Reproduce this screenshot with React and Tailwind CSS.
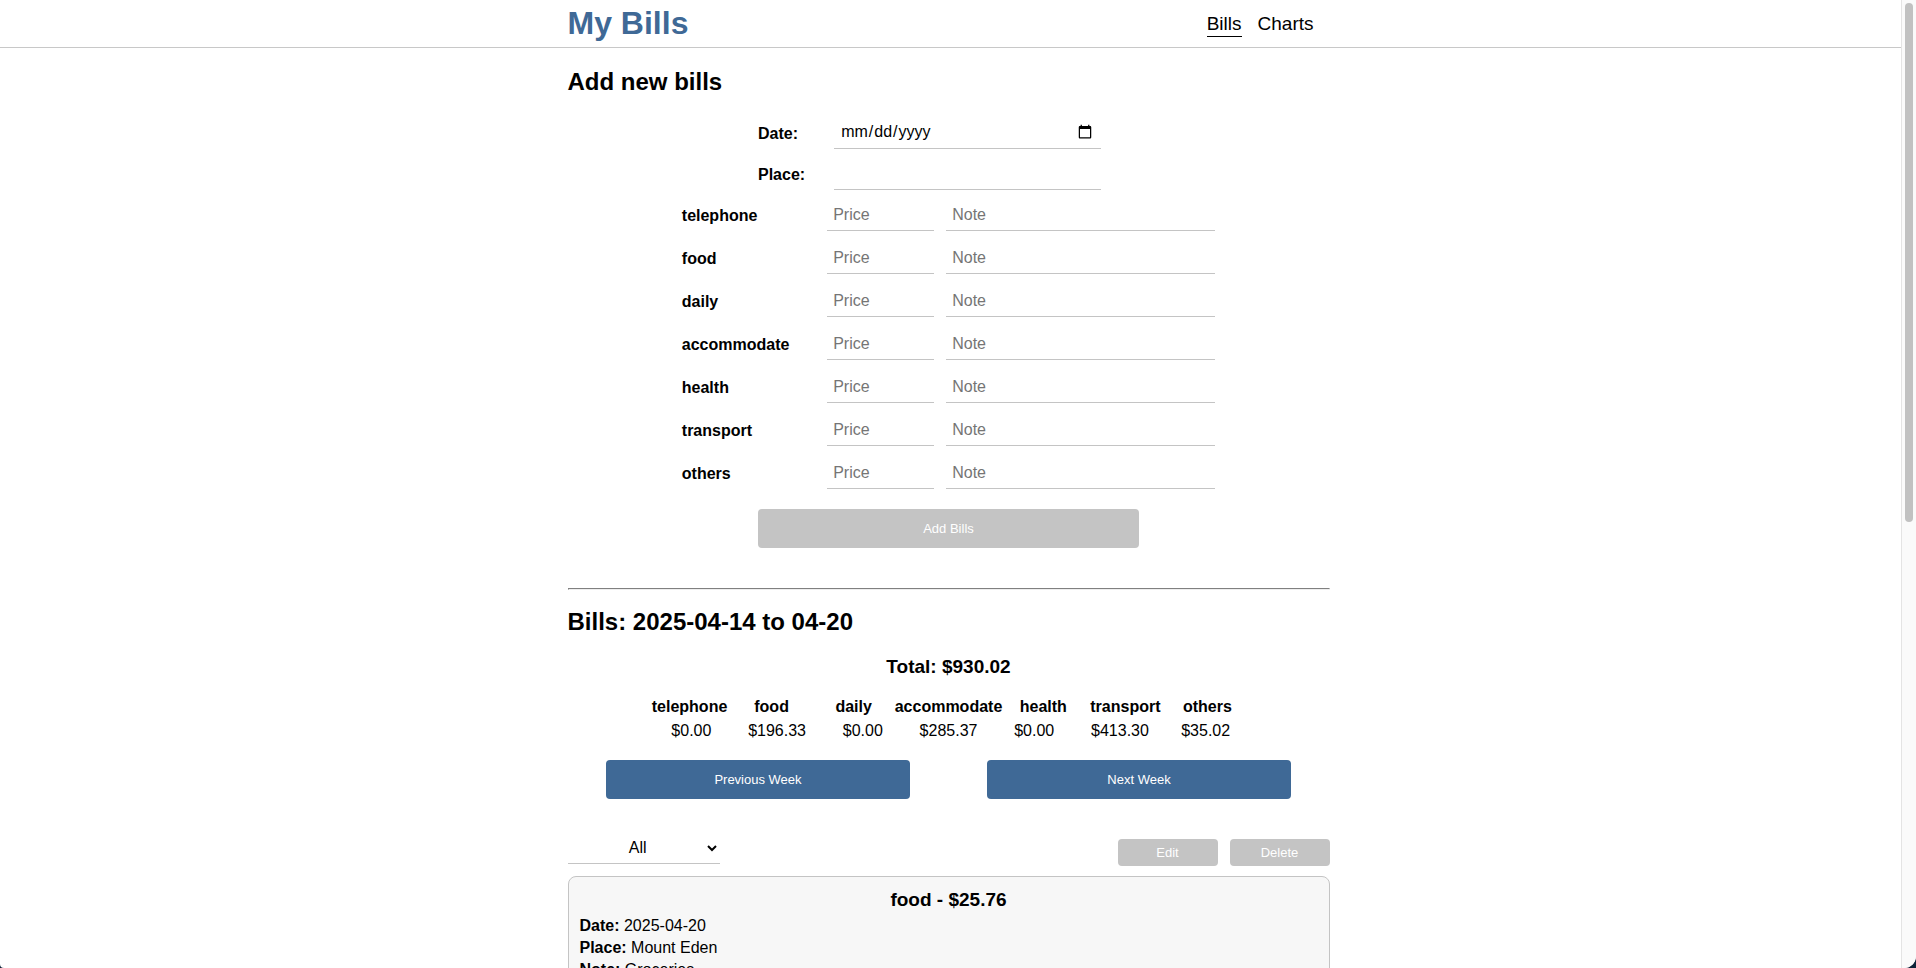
import { useState } from "react";

const categories = [
  { name: "telephone", total: "$0.00" },
  { name: "food", total: "$196.33" },
  { name: "daily", total: "$0.00" },
  { name: "accommodate", total: "$285.37" },
  { name: "health", total: "$0.00" },
  { name: "transport", total: "$413.30" },
  { name: "others", total: "$35.02" },
];

const bills = [
  { category: "food", price: "$25.76", date: "2025-04-20", place: "Mount Eden", note: "Groceries" },
];

const field =
  "h-8 border-b border-[#c4c4c4] bg-white px-1.5 text-base text-black placeholder:text-[#757575] outline-none";
const primaryButton = "h-[39px] rounded bg-[#3f6996] text-[13px] text-white";
const disabledButton = "rounded bg-[#c4c4c4] text-[13px] text-white";

function Header() {
  return (
    <header className="border-b border-[#c8c8c8] pr-1">
      <div className="mx-auto flex h-[47px] max-w-[762px] items-center justify-between pr-4">
        <h1 className="pb-0.5 text-[32px] leading-9 font-bold text-[#3f6996]">My Bills</h1>
        <nav className="flex gap-4 pt-0.5 text-[19px] leading-6">
          <a href="#bills" className="border-b border-black">Bills</a>
          <a href="#charts" className="border-b border-transparent">Charts</a>
        </nav>
      </div>
    </header>
  );
}

function BillForm() {
  return (
    <form>
      <h2 className="mt-5 text-2xl leading-7 font-bold">Add new bills</h2>
      <div className="mx-auto mt-[21px] flex w-1/2 flex-col gap-[9px]">
        <div className="flex items-center">
          <label htmlFor="date" className="w-1/5 pt-0.5 font-bold">Date:</label>
          <input id="date" type="date" className={`${field} w-[70%] pb-0.5`} />
        </div>
        <div className="flex items-center">
          <label htmlFor="place" className="w-1/5 pt-0.5 font-bold">Place:</label>
          <input id="place" type="text" className={`${field} w-[70%]`} />
        </div>
      </div>
      <div className="mx-auto mt-[9px] flex w-[70%] flex-col gap-[11px]">
        {categories.map(({ name }) => (
          <div key={name} className="flex items-center gap-3">
            <label htmlFor={name} className="-mr-3 flex-1 pt-0.5 font-bold">{name}</label>
            <input id={name} type="text" placeholder="Price" className={`${field} w-[107px]`} />
            <input type="text" placeholder="Note" aria-label={`${name} note`} className={`${field} w-[269px]`} />
          </div>
        ))}
      </div>
      <button type="submit" disabled className={`${disabledButton} mx-auto mt-5 block h-[39px] w-1/2`}>
        Add Bills
      </button>
    </form>
  );
}

function WeekSummary() {
  return (
    <section>
      <h2 className="mt-[18px] text-2xl leading-7 font-bold">Bills: 2025-04-14 to 04-20</h2>
      <h3 className="mt-[19px] text-center text-[19px] leading-6 font-bold">Total: $930.02</h3>
      <table className="mx-auto mt-4 block w-[600px] text-center">
        <thead className="block">
          <tr className="flex">
            {categories.map(({ name }) => (
              <th key={name} scope="col" className="flex-1">{name}</th>
            ))}
          </tr>
        </thead>
        <tbody className="block">
          <tr className="flex">
            {categories.map(({ name, total }) => (
              <td key={name} className="flex-1">{total}</td>
            ))}
          </tr>
        </tbody>
      </table>
      <div className="mt-[17px] flex justify-around">
        <button type="button" className={`${primaryButton} w-2/5`}>Previous Week</button>
        <button type="button" className={`${primaryButton} w-2/5`}>Next Week</button>
      </div>
    </section>
  );
}

function BillList() {
  const [filter, setFilter] = useState("All");
  return (
    <section>
      <div className="mt-[33px] flex justify-between">
        <select
          aria-label="Category"
          value={filter}
          onChange={(e) => setFilter(e.target.value)}
          className="h-8 w-1/5 border-b border-[#c4c4c4] bg-white text-center text-base text-black outline-none"
        >
          <option>All</option>
          {categories.map(({ name }) => (
            <option key={name}>{name}</option>
          ))}
        </select>
        <div className="flex gap-3 pt-[7px]">
          <button type="button" disabled className={`${disabledButton} h-[27px] w-[100px]`}>Edit</button>
          <button type="button" disabled className={`${disabledButton} h-[27px] w-[100px]`}>Delete</button>
        </div>
      </div>
      {bills
        .filter(({ category }) => filter === "All" || filter === category)
        .map(({ category, price, date, place, note }) => (
          <article key={date} className="mt-2.5 rounded-lg border border-[#c4c4c4] bg-[#f7f7f7] p-[11px] leading-[22px]">
            <h3 className="mb-[3px] text-center text-[19px] leading-6 font-bold">{category} - {price}</h3>
            <p><strong>Date:</strong> {date}</p>
            <p><strong>Place:</strong> {place}</p>
            <p><strong>Note:</strong> {note}</p>
          </article>
        ))}
    </section>
  );
}

export default function App() {
  return (
    <div className="h-screen bg-[#0d2238]">
      <div className="flex h-full overflow-hidden rounded-br-[12px] rounded-bl-[4px] bg-white font-['Liberation_Sans',Arial,sans-serif] text-base text-black">
        <div className="min-w-0 flex-1 overflow-y-auto [scrollbar-width:none]">
          <Header />
          <main className="pr-1">
            <div className="mx-auto max-w-[762px]">
              <BillForm />
              <hr className="mt-10 border border-t-[#808080] border-r-[#eeeeee] border-b-[#eeeeee] border-l-[#808080]" />
              <WeekSummary />
              <BillList />
            </div>
          </main>
        </div>
        <div aria-hidden="true" className="flex w-[15px] justify-center border-l border-[#e4e4e4] bg-[#fafafa] py-[3px]">
          <div className="h-[54%] w-2 rounded-full bg-[#c1c1c1]" />
        </div>
      </div>
    </div>
  );
}
